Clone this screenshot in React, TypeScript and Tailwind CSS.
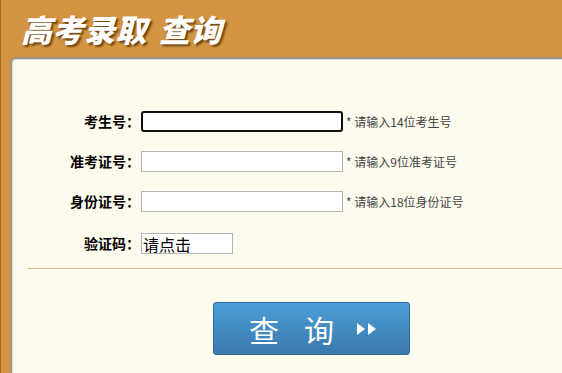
import React from "react";

const rows = [
  { label: "考生号：", hint: "* 请输入14位考生号", focus: true },
  { label: "准考证号：", hint: "* 请输入9位准考证号", focus: false },
  { label: "身份证号：", hint: "* 请输入18位身份证号", focus: false },
];

export default function App() {
  return (
    <div className="relative h-[373px] w-[562px] overflow-hidden border-l border-[#a86a22] bg-[#d39541] font-['Noto_Sans_CJK_SC',sans-serif]">
      <div className="flex h-[57px] items-center pl-[20px]">
        <h1 className="text-[31px] font-black italic leading-none tracking-[0.5px] text-white [text-shadow:2px_2px_2px_rgba(80,40,0,0.75)]">
          高考录取<span className="ml-[12px]">查询</span>
        </h1>
      </div>

      <div className="ml-[9px] h-[316px] rounded-tl-[6px] border-l-2 border-t-2 border-[#9d958a] bg-[#fdfaee] shadow-[inset_1px_1px_1px_rgba(0,0,0,0.12)]">
        <div className="flex flex-col gap-[19px] pt-[52px]">
          {rows.map((r) => (
            <div key={r.label} className="flex h-[21px] items-center">
              <span className="w-[128px] text-right text-[14px] font-bold text-black">{r.label}</span>
              <div
                className={
                  r.focus
                    ? "ml-[1px] h-[21px] w-[202px] rounded-[3px] border-2 border-[#111] bg-white"
                    : "ml-[1px] h-[21px] w-[202px] border border-[#b3b3b3] bg-white"
                }
              />
              <span className="ml-[3px] text-[12px] text-[#444]">{r.hint}</span>
            </div>
          ))}
          <div className="mt-[2px] flex h-[21px] items-center">
            <span className="w-[128px] text-right text-[14px] font-bold text-black">验证码：</span>
            <div className="ml-[1px] flex h-[21px] w-[92px] items-center border border-[#b3b3b3] bg-white pl-[1px] text-[16px] leading-none text-black">
              请点击
            </div>
          </div>
        </div>

        <div className="ml-[16px] mt-[14px] h-px bg-[#cdbf87]" />

        <div className="ml-[201px] mt-[33px] flex h-[53px] w-[197px] items-center justify-center rounded-[3px] border border-[#2f6a9c] bg-gradient-to-b from-[#4c9fd8] to-[#3a78ad] pl-[4px] text-white">
          <span className="text-[30px] leading-none">查</span>
          <span className="ml-[25px] text-[30px] leading-none">询</span>
          <svg className="ml-[22px]" width="22" height="14" viewBox="0 0 22 14">
            <path d="M1 1 L9 7 L1 13 Z" fill="white" />
            <path d="M12 1 L20 7 L12 13 Z" fill="white" />
          </svg>
        </div>
      </div>
    </div>
  );
}
